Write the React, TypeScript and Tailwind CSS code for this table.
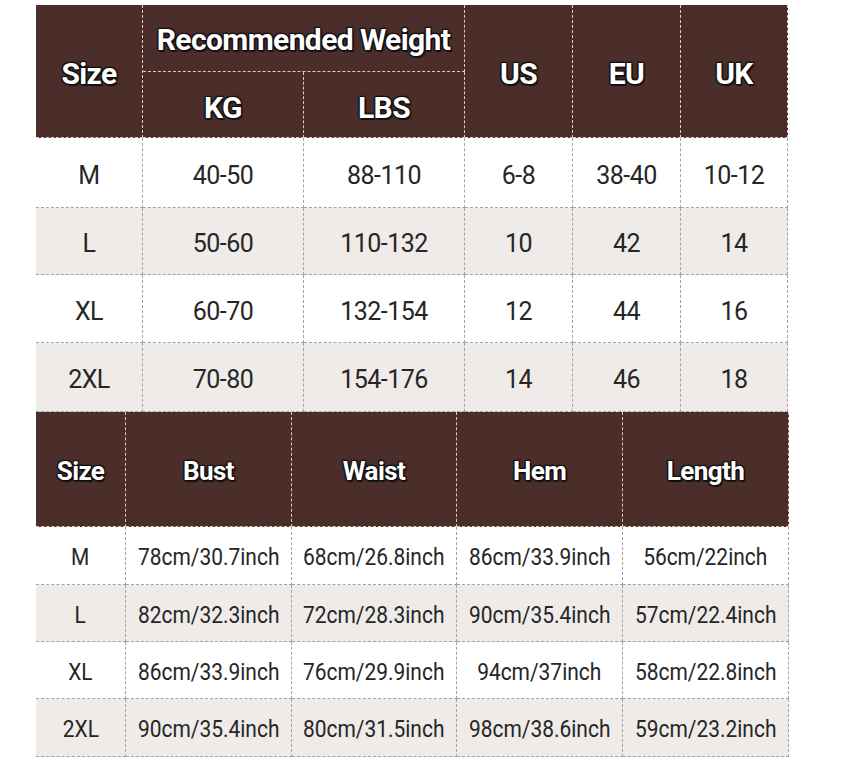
const weightRows = [
  ["M", "40-50", "88-110", "6-8", "38-40", "10-12"],
  ["L", "50-60", "110-132", "10", "42", "14"],
  ["XL", "60-70", "132-154", "12", "44", "16"],
  ["2XL", "70-80", "154-176", "14", "46", "18"],
];

const measureRows = [
  ["M", "78cm/30.7inch", "68cm/26.8inch", "86cm/33.9inch", "56cm/22inch"],
  ["L", "82cm/32.3inch", "72cm/28.3inch", "90cm/35.4inch", "57cm/22.4inch"],
  ["XL", "86cm/33.9inch", "76cm/29.9inch", "94cm/37inch", "58cm/22.8inch"],
  ["2XL", "90cm/35.4inch", "80cm/31.5inch", "98cm/38.6inch", "59cm/23.2inch"],
];

// white bold labels with a dark outline, like the printed size chart
const headCell =
  "flex items-center justify-center bg-[#4b2e2a] border-r border-b border-dashed border-[#dccbc3] font-bold text-white tracking-[-0.6px] [text-shadow:0_0_2px_#111,1.5px_1.5px_1px_#111,-1px_-1px_1px_#111,1px_-1px_1px_#111,-1px_1px_1px_#111]";

const bodyCell =
  "flex items-center justify-center pt-[6px] border-r border-b border-dashed border-[#a3a3a3] text-[#262626]";

export default function App() {
  return (
    <div className="min-h-[764px] w-[850px] bg-white pl-[36px] pt-[5px] font-[Roboto,sans-serif]">
      {/* weight / size conversion table */}
      <div className="grid w-[752px] grid-cols-[107px_161px_161px_108px_108px_107px] grid-rows-[67px_66px_70px_67px_68px_69px]">
        <div className={`${headCell} row-span-2 pt-[4px] text-[30px]`}>Size</div>
        <div className={`${headCell} col-span-2 pt-[2px] text-[30px]`}>Recommended Weight</div>
        <div className={`${headCell} row-span-2 pt-[4px] text-[30px]`}>US</div>
        <div className={`${headCell} row-span-2 pt-[4px] text-[30px]`}>EU</div>
        <div className={`${headCell} row-span-2 pt-[4px] text-[30px]`}>UK</div>
        <div className={`${headCell} pt-[5px] text-[30px]`}>KG</div>
        <div className={`${headCell} pt-[5px] text-[30px]`}>LBS</div>
        {weightRows.map((row, i) =>
          row.map((value, j) => (
            <div
              key={`${i}-${j}`}
              className={`${bodyCell} text-[25px] tracking-[-0.5px] ${i % 2 === 1 ? "bg-[#eeebe9]" : "bg-white"}`}
            >
              {value}
            </div>
          )),
        )}
      </div>

      {/* body measurements table */}
      <div className="grid w-[753px] grid-cols-[90px_166px_165px_166px_166px] grid-rows-[115px_58px_57px_57px_58px]">
        {["Size", "Bust", "Waist", "Hem", "Length"].map((label) => (
          <div key={label} className={`${headCell} pt-[4px] text-[26px]`}>
            {label}
          </div>
        ))}
        {measureRows.map((row, i) =>
          row.map((value, j) => (
            <div
              key={`${i}-${j}`}
              className={`${bodyCell} text-[23px] ${i % 2 === 1 ? "bg-[#eeebe9]" : "bg-white"}`}
            >
              <span className="inline-block scale-x-[0.91] whitespace-nowrap">{value}</span>
            </div>
          )),
        )}
      </div>
    </div>
  );
}
